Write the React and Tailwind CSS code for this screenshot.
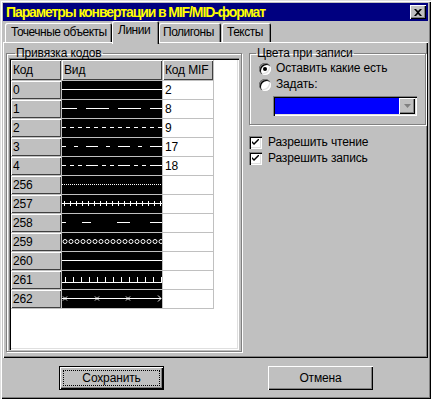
import React from "react";

const raised = "shadow-[inset_1px_1px_#fff,inset_-1px_-1px_#000,inset_-2px_-2px_#808080]";
const sunken = "shadow-[inset_1px_1px_#808080,inset_2px_2px_#000,inset_-1px_-1px_#fff,inset_-2px_-2px_#dfdfdf]";
const tabShadow = "shadow-[inset_1px_1px_#fff,inset_-1px_0_#000,inset_-2px_0_#808080]";

// line style previews, 100x18 cell, white on black
function LineStyle({ code }) {
    const y = 8.5;
    let content = null;
    if (code === 0 || code === 260) {
        content = <line x1="0" y1={y} x2="100" y2={y} stroke="#fff" />;
    } else if (code === 1) {
        content = <line x1="0" y1={y} x2="100" y2={y} stroke="#fff" strokeDasharray="23 9" strokeDashoffset="8" />;
    } else if (code === 2) {
        content = <line x1="0" y1={y} x2="100" y2={y} stroke="#fff" strokeDasharray="4 4" />;
    } else if (code === 3) {
        content = <line x1="0" y1={y} x2="100" y2={y} stroke="#fff" strokeDasharray="12 8 4 8" strokeDashoffset="8" />;
    } else if (code === 4) {
        content = <line x1="0" y1={y} x2="100" y2={y} stroke="#fff" strokeDasharray="12 4 4 4 4 4" strokeDashoffset="8" />;
    } else if (code === 256) {
        content = <line x1="0" y1={y} x2="100" y2={y} stroke="#fff" strokeDasharray="1 1" />;
    } else if (code === 257) {
        const ticks = [];
        for (let x = 2; x < 100; x += 6) {
            ticks.push(<line key={x} x1={x + 0.5} y1="6" x2={x + 0.5} y2="11" stroke="#fff" />);
        }
        content = (
            <>
                <line x1="0" y1={y} x2="100" y2={y} stroke="#fff" />
                {ticks}
            </>
        );
    } else if (code === 258) {
        content = (
            <>
                {[[0, 4], [20, 29], [55, 68], [88, 100]].map(([a, b]) => (
                    <line key={a} x1={a} y1={y} x2={b} y2={y} stroke="#fff" />
                ))}
            </>
        );
    } else if (code === 259) {
        const circles = [];
        for (let x = 3; x < 100; x += 6) {
            circles.push(<circle key={x} cx={x} cy={y} r="2" fill="none" stroke="#fff" />);
        }
        content = <>{circles}</>;
    } else if (code === 261) {
        const ticks = [];
        for (let x = 3; x < 100; x += 8) {
            ticks.push(<line key={x} x1={x + 0.5} y1="6" x2={x + 0.5} y2="12" stroke="#fff" />);
        }
        content = (
            <>
                <line x1="0" y1="11.5" x2="100" y2="11.5" stroke="#fff" />
                {ticks}
            </>
        );
    } else if (code === 262) {
        content = (
            <>
                <line x1="0" y1={y} x2="99" y2={y} stroke="#fff" />
                {[3, 35, 66].map((x) => (
                    <path key={x} d={`M${x - 2} ${y - 2}L${x + 2} ${y + 2}M${x - 2} ${y + 2}L${x + 2} ${y - 2}`} stroke="#fff" />
                ))}
                <path d={`M96 ${y - 3}L99 ${y}L96 ${y + 3}`} stroke="#fff" fill="none" />
            </>
        );
    }
    return (
        <svg width="100" height="18" className="block bg-black">
            {content}
        </svg>
    );
}

const rows = [
    { code: 0, mif: "2" },
    { code: 1, mif: "8" },
    { code: 2, mif: "9" },
    { code: 3, mif: "17" },
    { code: 4, mif: "18" },
    { code: 256, mif: "" },
    { code: 257, mif: "" },
    { code: 258, mif: "" },
    { code: 259, mif: "" },
    { code: 260, mif: "" },
    { code: 261, mif: "" },
    { code: 262, mif: "" },
];

const cellBtn = "bg-[#c0c0c0] shadow-[inset_1px_1px_#fff,inset_-1px_-1px_#404040] pl-[2px] flex items-center";

export default function App() {
    return (
        <div
            className={`w-[431px] h-[399px] bg-[#c0c0c0] p-[3px] flex flex-col text-black text-[12px] leading-[15px] tracking-[-0.15px] whitespace-nowrap shadow-[inset_1px_1px_#dfdfdf,inset_2px_2px_#fff,inset_-1px_-1px_#000,inset_-2px_-2px_#808080]`}
            style={{ fontFamily: '"Liberation Sans", Arial, sans-serif' }}
        >
            {/* Title bar */}
            <div className="h-[18px] bg-[#000080] flex items-center justify-between pl-[3px] pr-[2px]">
                <span className="text-[#ffff00] font-bold text-[14px] tracking-[-1.1px] leading-none">
                    Параметры конвертации в MIF/MID-формат
                </span>
                <div className={`w-[16px] h-[14px] bg-[#c0c0c0] ${raised} flex items-center justify-center`}>
                    <svg width="8" height="7" viewBox="0 0 8 7">
                        <path d="M0 0h2l2 2 2-2h2L5 3.5 8 7H6L4 5 2 7H0l3-3.5z" fill="#000" />
                    </svg>
                </div>
            </div>

            {/* Tabs */}
            <div className="h-[21px] flex items-end pl-[2px] tracking-[-0.5px]">
                <div className={`h-[19px] w-[107px] pl-[6px] pt-[2px] ${tabShadow} rounded-t-[2px]`}>
                    Точечные объекты
                </div>
                <div className={`relative z-10 -mb-[2px] h-[23px] w-[47px] pl-[6px] pt-[2px] bg-[#c0c0c0] ${tabShadow} rounded-t-[2px]`}>
                    Линии
                </div>
                <div className={`h-[19px] w-[62px] pl-[4px] pt-[2px] ${tabShadow} rounded-t-[2px]`}>
                    Полигоны
                </div>
                <div className={`h-[19px] w-[49px] ml-[1px] pl-[5px] pt-[2px] ${tabShadow} rounded-t-[2px]`}>
                    Тексты
                </div>
            </div>

            {/* Panel */}
            <div className={`h-[316px] ${raised} flex pt-[4px] pl-[3px] gap-[7px]`}>
                <fieldset className="w-[235px] h-[306px] border border-[#808080] shadow-[inset_1px_1px_#fff,1px_1px_#fff] px-[2px]">
                    <legend className="ml-[6px] px-[1px] leading-[14px]">Привязка кодов</legend>
                    <div className={`w-[230px] h-[292px] bg-white ${sunken} p-[2px] -mt-[2px]`}>
                        <div className="grid grid-cols-[50px_100px_50px] gap-px w-fit bg-[#c0c0c0] pr-px pb-px">
                            <div className={`${cellBtn} h-[20px]`}>Код</div>
                            <div className={`${cellBtn} h-[20px]`}>Вид</div>
                            <div className={`${cellBtn} h-[20px]`}>Код MIF</div>
                            {rows.map((r) => (
                                <React.Fragment key={r.code}>
                                    <div className={`${cellBtn} h-[18px]`}>{r.code}</div>
                                    <LineStyle code={r.code} />
                                    <div className="bg-white h-[18px] pl-[2px] flex items-center">{r.mif}</div>
                                </React.Fragment>
                            ))}
                        </div>
                    </div>
                </fieldset>

                <div className="flex flex-col">
                    <fieldset className="w-[177px] h-[79px] border border-[#808080] shadow-[inset_1px_1px_#fff,1px_1px_#fff]">
                        <legend className="ml-[6px] px-[1px] leading-[14px]">Цвета при записи</legend>
                        <div className="flex flex-col pl-[9px] pt-[1px] gap-[1px]">
                            <label className="flex items-center gap-[5px] h-[15px]">
                                <span className={`w-[12px] h-[12px] rounded-full bg-white ${sunken} flex items-center justify-center`}>
                                    <span className="w-[4px] h-[4px] rounded-full bg-black" />
                                </span>
                                Оставить какие есть
                            </label>
                            <label className="flex items-center gap-[5px] h-[15px]">
                                <span className={`w-[12px] h-[12px] rounded-full bg-white ${sunken}`} />
                                Задать:
                            </label>
                            <div className={`ml-[14px] mt-[3px] w-[144px] h-[20px] bg-white ${sunken} p-[2px] flex`}>
                                <div className="flex-1 bg-[#0000ff]" />
                                <div className={`w-[16px] bg-[#c0c0c0] ${raised} flex items-center justify-center`}>
                                    <svg width="7" height="4" viewBox="0 0 7 4">
                                        <path d="M0 0h7L3.5 4z" fill="#808080" />
                                    </svg>
                                </div>
                            </div>
                        </div>
                    </fieldset>
                    <div className="flex flex-col gap-[3px] mt-[11px]">
                        {["Разрешить чтение", "Разрешить запись"].map((t) => (
                            <label key={t} className="flex items-center gap-[6px] h-[13px]">
                                <span className={`w-[13px] h-[13px] bg-white ${sunken} flex items-center justify-center`}>
                                    <svg width="7" height="7" viewBox="0 0 7 7">
                                        <path d="M0 2l2 2 5-5v2L2 6 0 4z" fill="#000" />
                                    </svg>
                                </span>
                                {t}
                            </label>
                        ))}
                    </div>
                </div>
            </div>

            {/* Buttons */}
            <div className="flex-1 flex items-start pt-[8px] pl-[56px] gap-[104px]">
                <div className="w-[105px] h-[24px] border border-black bg-[#c0c0c0] flex">
                    <div className={`flex-1 ${raised} p-[3px] flex`}>
                        <div className="flex-1 border border-dotted border-black flex items-center justify-center">
                            Сохранить
                        </div>
                    </div>
                </div>
                <div className={`w-[105px] h-[24px] bg-[#c0c0c0] ${raised} flex items-center justify-center`}>
                    Отмена
                </div>
            </div>
        </div>
    );
}
